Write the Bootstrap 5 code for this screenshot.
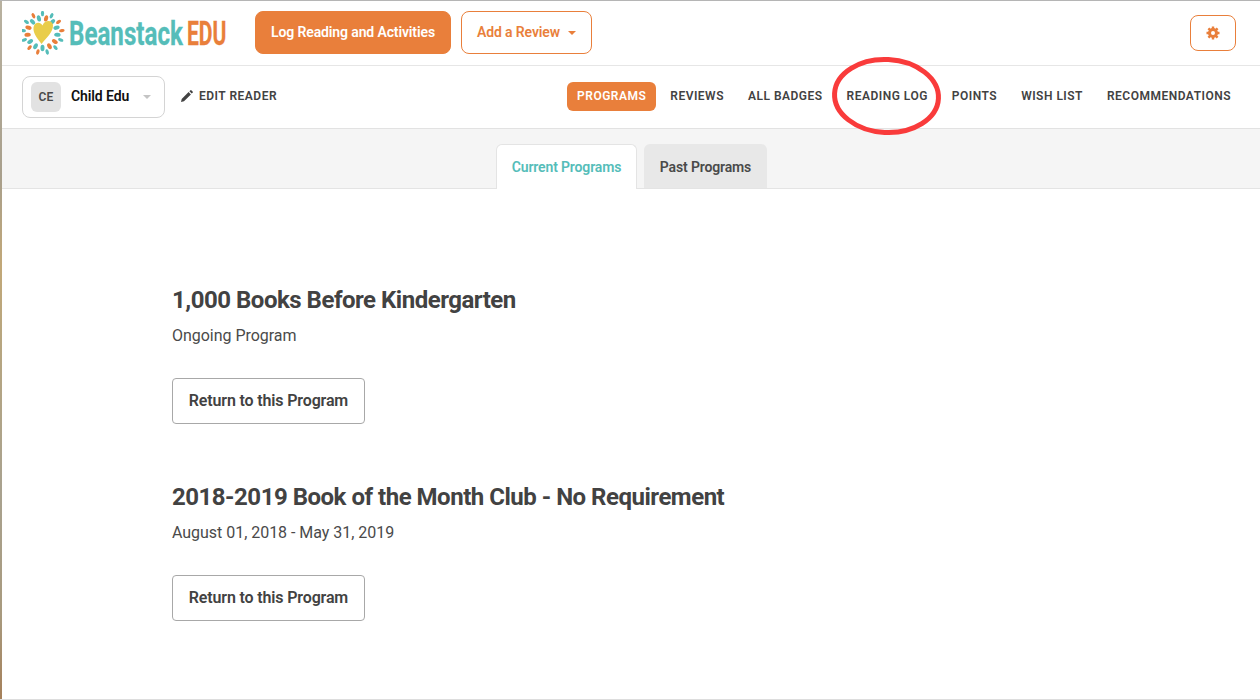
<!DOCTYPE html>
<html lang="en">
<head>
<meta charset="UTF-8">
<title>Beanstack EDU</title>
<link href="https://cdn.jsdelivr.net/npm/bootstrap@5.3.0/dist/css/bootstrap.min.css" rel="stylesheet">
<style>
body { font-family: Roboto, "Liberation Sans", sans-serif; color: #424242; background: #fff; height: 700px; overflow: hidden; position: relative; }
.page-wrap { border-top: 1px solid #b5b5b5; border-bottom: 1px solid #ddd; height: 700px; background: #fff; padding-left: 2px; background-image: linear-gradient(180deg, #b9b2a0 0, #a89f8c 25%, #c2a878 38%, #b8a67f 48%, #a9a28f 70%, #a89a7e 88%, #a5805a 100%); background-size: 2px 100%; background-repeat: no-repeat; }
.top-bar { height: 65px; padding: 10px 24px 0 20px; border-bottom: 1px solid #e6e6e6; }
.logo-box { width: 233px; height: 44px; }
.logo-word { display: inline-block; font-size: 34px; line-height: 44px; font-weight: 700; color: #55bdb9; -webkit-text-stroke: .3px currentColor; transform-origin: left center; white-space: nowrap; }
.logo-bean { width: 118px; margin-left: 0; transform: scaleX(.71); }
.logo-edu { color: #e97f3b; width: 39px; transform: scaleX(.62); }
.btn-log { background: #e97f3b; color: #fff; border: 1px solid #e97f3b; border-radius: 8px; height: 43px; width: 196px; font-size: 14px; font-weight: 600; letter-spacing: -.12px; padding: 0; }
.btn-review { background: #fff; color: #e97f3b; border: 1px solid #e97f3b; border-radius: 8px; height: 43px; width: 131px; font-size: 14px; font-weight: 600; letter-spacing: -.12px; padding: 0; margin-left: 10px; }
.btn-review::after { margin-left: 8px; vertical-align: 2px; border-top-width: 4px; border-left-width: 4px; border-right-width: 4px; }
.btn-gear { background: #fff; border: 1px solid #e97f3b; border-radius: 8px; width: 46px; height: 36px; padding: 0; margin-top: 4px; }
.sub-bar { height: 63px; padding: 0 19px 0 20px; border-bottom: 1px solid #e2e2e2; }
.reader-box { width: 143px; height: 42px; border: 1px solid #d4d4d4; border-radius: 8px; padding-left: 8px; }
.reader-av { width: 30px; height: 30px; background: #e2e2e2; border-radius: 6px; font-size: 12px; font-weight: 600; color: #4a4a4a; letter-spacing: .3px; }
.reader-name { font-size: 14px; font-weight: 600; letter-spacing: -.1px; color: #111; margin-left: 10px; padding-bottom: 2px; }
.reader-caret { width: 0; height: 0; border-left: 4px solid transparent; border-right: 4px solid transparent; border-top: 4px solid #c4c4c4; margin-left: 14px; }
.edit-link { font-size: 12px; font-weight: 600; letter-spacing: .5px; color: #424242; margin: 0 0 2px 16px; text-decoration: none; }
.edit-link svg { margin-right: 6px; vertical-align: -2px; }
.menu-link { font-size: 12px; font-weight: 600; letter-spacing: .49px; color: #424242; text-decoration: none; padding: 7px 10px; border-radius: 6px; height: 29px; line-height: 15px; margin-left: 4px; white-space: nowrap; }
.menu-link.on { background: #e97f3b; color: #fff; margin-left: 0; }
.menu-row { margin-bottom: 2px; }
.tab-band { height: 60px; background: #f5f5f5; border-bottom: 1px solid #e4e4e4; }
.tab-item { font-size: 14px; font-weight: 600; letter-spacing: -.15px; height: 44px; border-radius: 6px 6px 0 0; text-decoration: none; line-height: 46px; text-align: center; }
.tab-on { width: 141px; height: 45px; margin-bottom: -1px; background: #fff; border: 1px solid #e4e4e4; border-bottom: 0; color: #55bdb9; line-height: 44px; text-indent: 1px; }
.tab-off { width: 123px; background: #e8e8e8; color: #4a4a4a; margin-left: 7px; text-indent: 1px; }
.prog-list { padding: 93px 0 0 170px; }
.prog-item { height: 197px; }
.prog-title { font-size: 24px; font-weight: 700; letter-spacing: -.49px; color: #424242; line-height: 36px; margin: 0; }
.prog-date { font-size: 16px; color: #4a4a4a; line-height: 24px; margin: 6px 0 0; letter-spacing: -.03px; }
.btn-return { display: block; width: 193px; height: 46px; margin-top: 30px; padding: 0; background: #fff; border: 1px solid #a8a8a8; border-radius: 4px; font-size: 16px; font-weight: 600; letter-spacing: -.15px; color: #424242; }
.circle-mark { position: absolute; left: 828px; top: 54px; pointer-events: none; }
</style>
</head>
<body>
<div class="page-wrap">
  <div class="top-bar d-flex">
    <div class="logo-box flex-shrink-0 d-flex">
      <svg width="47" height="44" viewBox="0 0 47 44" class="flex-shrink-0">
        <g id="rays"></g>
        <path d="M19.500 33 C15 27 11 22.500 11.500 16.500 C12 11.500 18 10 20.500 14.500 C22.500 9 30 8.500 31 14 C31.500 21 24 27 19.500 33Z" fill="#e9cd4a"/>
      </svg>
      <span class="logo-word logo-bean">Beanstack</span>
      <span class="logo-word logo-edu">EDU</span>
    </div>
    <button class="btn-log">Log Reading and Activities</button>
    <button class="btn-review dropdown-toggle">Add a Review</button>
    <button class="btn-gear ms-auto d-flex align-items-center justify-content-center">
      <svg width="14" height="14" viewBox="0 0 14 14"><circle cx="7" cy="7" r="3.500" fill="none" stroke="#e97f3b" stroke-width="3"/><g stroke="#e97f3b" stroke-width="2.400"><path d="M7 .5V3M7 11v2.500M.5 7H3M11 7h2.500M2.400 2.400l1.800 1.800M9.800 9.800l1.800 1.800M11.600 2.400L9.800 4.200M4.200 9.800l-1.800 1.800"/></g></svg>
    </button>
  </div>
  <div class="sub-bar d-flex align-items-center">
    <div class="reader-box d-flex align-items-center">
      <span class="reader-av d-flex align-items-center justify-content-center">CE</span>
      <span class="reader-name">Child Edu</span>
      <span class="reader-caret"></span>
    </div>
    <a class="edit-link" href="#"><svg width="12" height="12" viewBox="0 0 12 12"><path d="M0 12l.7-3L7.600 2.100l2.300 2.300L3 11.300zM8.400 1.300L9.500.2q.4-.3.800 0l1.500 1.500q.3.400 0 .8l-1.100 1.100z" fill="#424242"/></svg>EDIT READER</a>
    <nav class="menu-row d-flex ms-auto">
      <a class="menu-link on" href="#">PROGRAMS</a>
      <a class="menu-link" href="#">REVIEWS</a>
      <a class="menu-link" href="#">ALL BADGES</a>
      <a class="menu-link" href="#">READING LOG</a>
      <a class="menu-link" href="#">POINTS</a>
      <a class="menu-link" href="#">WISH LIST</a>
      <a class="menu-link" href="#">RECOMMENDATIONS</a>
    </nav>
  </div>
  <div class="tab-band d-flex justify-content-center align-items-end">
    <a class="tab-item tab-on" href="#">Current Programs</a>
    <a class="tab-item tab-off" href="#">Past Programs</a>
  </div>
  <div class="prog-list">
    <div class="prog-item">
      <h2 class="prog-title">1,000 Books Before Kindergarten</h2>
      <p class="prog-date">Ongoing Program</p>
      <button class="btn-return">Return to this Program</button>
    </div>
    <div class="prog-item">
      <h2 class="prog-title">2018-2019 Book of the Month Club - No Requirement</h2>
      <p class="prog-date">August 01, 2018 - May 31, 2019</p>
      <button class="btn-return">Return to this Program</button>
    </div>
  </div>
</div>
<svg class="circle-mark" width="118" height="86" viewBox="0 0 118 86"><ellipse cx="58.500" cy="42" rx="52" ry="36.500" fill="none" stroke="#f93b3b" stroke-width="5" transform="rotate(3 58.500 42)"/></svg>
<script>
  // petals of the logo sun: outer ring small, inner ring larger
  const rays = document.getElementById('rays');
  const colors = ['#55bdb9', '#e97f3b', '#55bdb9', '#55bdb9', '#e97f3b'];
  let html = '';
  for (let i = 0; i < 26; i++) {
    const a = i * 360 / 26;
    const far = i % 2 === 0;
    const r = far ? 19.5 : 15;
    const rx = far ? 1.6 : 2;
    const ry = far ? 2.8 : 3.2;
    html += '<ellipse cx="20.500" cy="' + (22 - r) + '" rx="' + rx + '" ry="' + ry + '" fill="' + colors[i % 5] + '" transform="rotate(' + a + ' 20.500 22)"/>';
  }
  rays.innerHTML = html;
</script>
</body>
</html>
